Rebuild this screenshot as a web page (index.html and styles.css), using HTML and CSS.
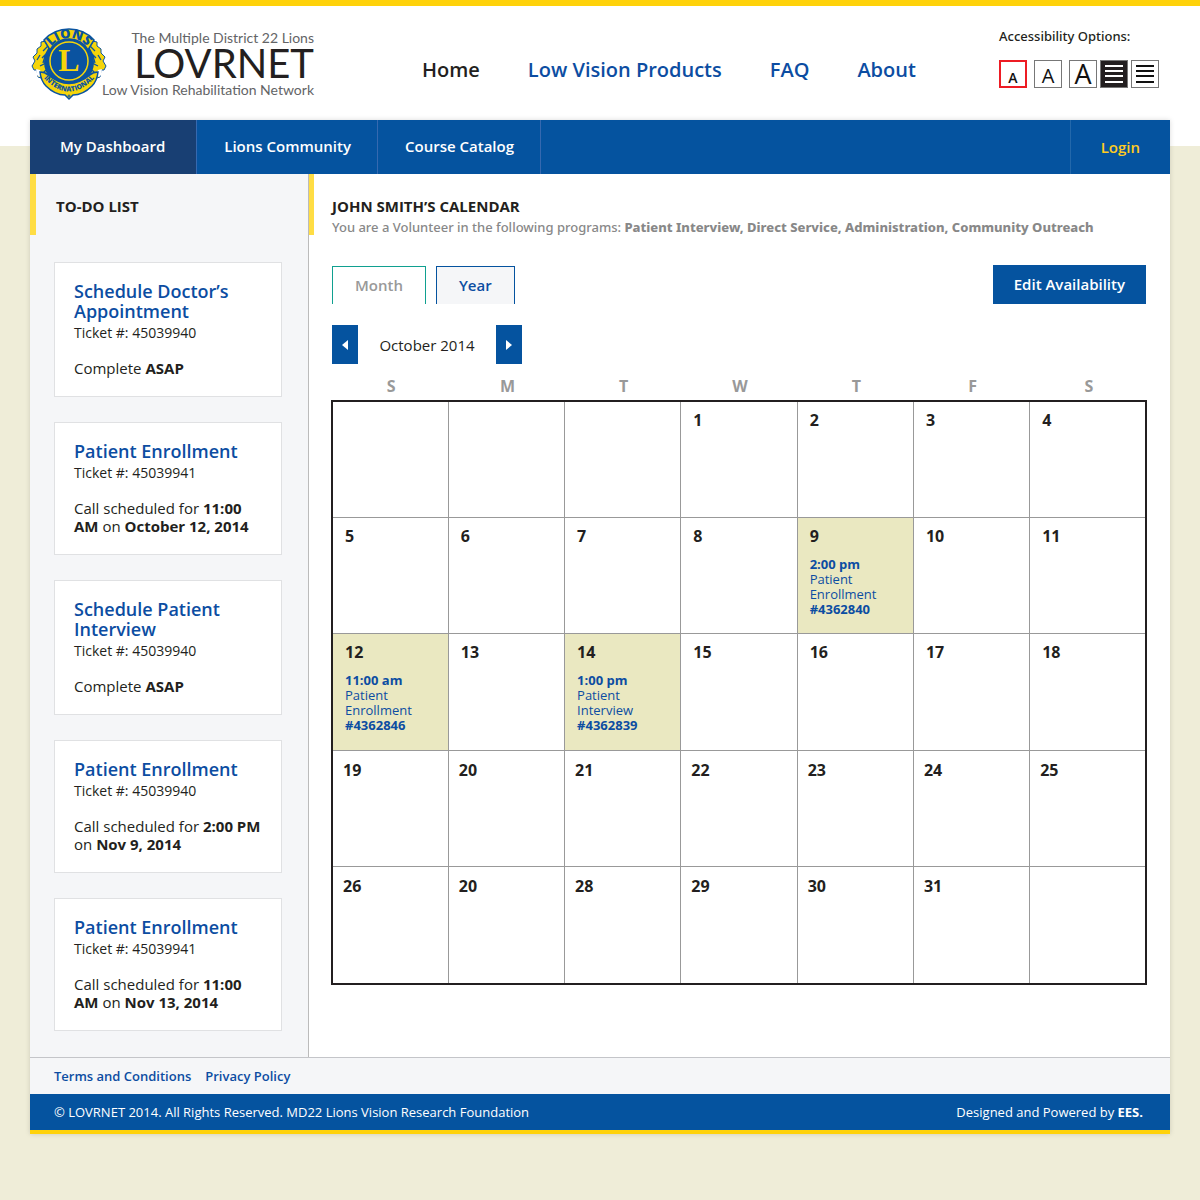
FILE: index.html
```html
<!DOCTYPE html>
<html lang="en">
<head>
<meta charset="utf-8">
<meta name="viewport" content="width=device-width, initial-scale=1">
<title>LOVRNET – My Dashboard</title>
<link rel="stylesheet" href="styles.css">
</head>
<body>
<header class="header">
  <a class="logo" href="#">
    <svg class="emblem" viewBox="0 0 76 74" width="76" height="74" role="img" aria-label="Lions International">
      <defs>
        <path id="arc-top" d="M15 35a23 23 0 0 1 46 0"/>
        <path id="arc-bottom" d="M9 48Q38 83 67 48"/>
      </defs>
      <g id="lion">
        <path fill="#f5d50a" stroke="#0a53a0" stroke-width="1" d="M22 13L17 12 15 15 10 16 10 20 6 23 6 27 2 31 4 35 1 40 3 44 6 44 7 51 13 53 24 52z"/>
        <path fill="none" stroke="#0a53a0" stroke-width="1.300" d="M17 20l-5 5M18 25l-7 7M14 30l-2 7M9 29l-3 5M15 37l-6 3M15 44l-3 3M15 17l2 3"/>
        <path fill="#fff" d="M5 43l4 1 2 5-3 2-2-2z"/>
      </g>
      <use href="#lion" transform="matrix(-1 0 0 1 76 0)"/>
      <circle cx="38" cy="36" r="25" fill="#0a53a0"/>
      <path fill="#f5d50a" stroke="#0a53a0" stroke-width="1.500" d="M13 14A34 34 0 0 1 63 14L57 24A22 22 0 0 0 19 24z"/>
      <circle cx="38" cy="35" r="19" fill="#0a53a0" stroke="#f5d50a" stroke-width="1.500"/>
      <path fill="#f5d50a" stroke="#0a53a0" stroke-width="1.500" d="M9 46Q14 46 17 49 38 66 59 49 62 46 67 46 66 55 61 60 52 69 42 69L38 73 34 69Q24 69 15 60 10 55 9 46z"/>
      <text class="emblem-name"><textPath href="#arc-top" startOffset="50%">LIONS</textPath></text>
      <text class="emblem-world"><textPath href="#arc-bottom" startOffset="50%">INTERNATIONAL</textPath></text>
      <text class="emblem-initial" x="38" y="45">L</text>
      <circle cx="38" cy="70" r="1" fill="none" stroke="#0a53a0"/>
    </svg>
    <span class="wordmark">
      <span class="wordmark-small">The Multiple District 22 Lions</span>
      <span class="wordmark-big">LOVRNET</span>
      <span class="wordmark-small">Low Vision Rehabilitation Network</span>
    </span>
  </a>
  <nav class="site-nav" aria-label="Site">
    <a class="current" href="#">Home</a>
    <a href="#">Low Vision Products</a>
    <a href="#">FAQ</a>
    <a href="#">About</a>
  </nav>
  <div class="access">
    <p class="access-title">Accessibility Options:</p>
    <div class="access-row">
      <button class="access-btn size-s selected" type="button" aria-label="Small text">A</button>
      <button class="access-btn size-m" type="button" aria-label="Medium text">A</button>
      <button class="access-btn size-l" type="button" aria-label="Large text">A</button>
      <button class="access-btn contrast dark" type="button" aria-label="High contrast">
        <svg width="18" height="18" viewBox="0 0 18 18"><path d="M0 1h18M0 6h18M0 11h18M0 17h18" stroke="currentColor" stroke-width="2"/></svg>
      </button>
      <button class="access-btn contrast" type="button" aria-label="Normal contrast">
        <svg width="18" height="18" viewBox="0 0 18 18"><path d="M0 1h18M0 6h18M0 11h18M0 17h18" stroke="currentColor" stroke-width="2"/></svg>
      </button>
    </div>
  </div>
</header>

<div class="page">
  <nav class="main-nav" aria-label="Main">
    <a class="active" href="#">My Dashboard</a>
    <a href="#">Lions Community</a>
    <a href="#">Course Catalog</a>
    <a class="login" href="#">Login</a>
  </nav>

  <div class="columns">
    <aside class="sidebar">
      <h2 class="heading sidebar-heading">TO-DO LIST</h2>
      <div class="tasks">
        <article class="task">
          <h3><a href="#">Schedule Doctor’s Appointment</a></h3>
          <p>Ticket #: 45039940</p>
          <p class="note">Complete <b>ASAP</b></p>
        </article>
        <article class="task">
          <h3><a href="#">Patient Enrollment</a></h3>
          <p>Ticket #: 45039941</p>
          <p class="note">Call scheduled for <b>11:00 AM</b> on <b>October 12, 2014</b></p>
        </article>
        <article class="task">
          <h3><a href="#">Schedule Patient Interview</a></h3>
          <p>Ticket #: 45039940</p>
          <p class="note">Complete <b>ASAP</b></p>
        </article>
        <article class="task">
          <h3><a href="#">Patient Enrollment</a></h3>
          <p>Ticket #: 45039940</p>
          <p class="note">Call scheduled for <b>2:00 PM</b> on <b>Nov 9, 2014</b></p>
        </article>
        <article class="task">
          <h3><a href="#">Patient Enrollment</a></h3>
          <p>Ticket #: 45039941</p>
          <p class="note">Call scheduled for <b>11:00 AM</b> on <b>Nov 13, 2014</b></p>
        </article>
      </div>
    </aside>

    <main class="main">
      <div class="main-head">
        <h1 class="heading">JOHN SMITH’S CALENDAR</h1>
        <p class="programs">You are a Volunteer in the following programs: <b>Patient Interview, Direct Service, Administration, Community Outreach</b></p>
      </div>
      <div class="toolbar">
        <div class="tabs">
          <button class="tab tab-month" type="button">Month</button>
          <button class="tab tab-year" type="button">Year</button>
        </div>
        <button class="edit" type="button">Edit Availability</button>
      </div>
      <div class="pager">
        <button class="pager-btn" type="button" aria-label="Previous month"><svg width="6" height="10" viewBox="0 0 6 10"><path d="M6 0v10L0 5z" fill="currentColor"/></svg></button>
        <span class="pager-label">October 2014</span>
        <button class="pager-btn" type="button" aria-label="Next month"><svg width="6" height="10" viewBox="0 0 6 10"><path d="M0 0v10L6 5z" fill="currentColor"/></svg></button>
      </div>
      <table class="calendar">
        <thead>
          <tr><th>S</th><th>M</th><th>T</th><th>W</th><th>T</th><th>F</th><th>S</th></tr>
        </thead>
        <tbody>
          <tr><td></td><td></td><td></td><td>1</td><td>2</td><td>3</td><td>4</td></tr>
          <tr><td>5</td><td>6</td><td>7</td><td>8</td>
            <td class="busy">9<a class="event" href="#"><b>2:00 pm</b> <span>Patient Enrollment</span> <b>#4362840</b></a></td>
            <td>10</td><td>11</td></tr>
          <tr><td class="busy">12<a class="event" href="#"><b>11:00 am</b> <span>Patient Enrollment</span> <b>#4362846</b></a></td>
            <td>13</td>
            <td class="busy">14<a class="event" href="#"><b>1:00 pm</b> <span>Patient Interview</span> <b>#4362839</b></a></td>
            <td>15</td><td>16</td><td>17</td><td>18</td></tr>
          <tr><td>19</td><td>20</td><td>21</td><td>22</td><td>23</td><td>24</td><td>25</td></tr>
          <tr><td>26</td><td>20</td><td>28</td><td>29</td><td>30</td><td>31</td><td></td></tr>
        </tbody>
      </table>
    </main>
  </div>

  <footer>
    <div class="links">
      <a href="#">Terms and Conditions</a>
      <a href="#">Privacy Policy</a>
    </div>
    <div class="legal">
      <span>© LOVRNET 2014. All Rights Reserved. MD22 Lions Vision Research Foundation</span>
      <span>Designed and Powered by <b>EES.</b></span>
    </div>
  </footer>
</div>
</body>
</html>
```
FILE: styles.css
```css
* { box-sizing: border-box; }

:root {
  --blue: #05539f;
  --link: #0c4da2;
  --ink: #231f20;
  --yellow: #ffd20a;
  --pale: #f5f6f8;
  --grey: #999;
}

body {
  margin: 0;
  min-height: 100vh;
  background: #efedd8 linear-gradient(#fff, #fff) no-repeat 0 0 / 100% 146px;
  border-top: 6px solid var(--yellow);
  color: var(--ink);
  font-family: "Open Sans", "Noto Sans", sans-serif;
  font-size: 15px;
}

h1, h2, h3, p { margin: 0; }
a { color: var(--link); text-decoration: none; }
button { padding: 0; font-family: inherit; cursor: pointer; }

/* Header */
.header {
  display: flex;
  align-items: flex-start;
  height: 114px;
  padding: 20px 41px 0 31px;
}

.logo { display: flex; color: var(--ink); }
.emblem { flex: none; margin-right: -3px; overflow: visible; }
.emblem text { text-anchor: middle; font-family: "Open Sans", sans-serif; font-weight: 800; }
.emblem .emblem-name { fill: #0a53a0; font-size: 13px; }
.emblem .emblem-world { fill: #0a53a0; font-size: 7px; }
.emblem .emblem-initial { fill: #f5d50a; font-family: "Liberation Serif", serif; font-weight: 700; font-size: 32px; }

.wordmark {
  display: flex;
  flex-direction: column;
  align-items: flex-end;
  width: 210px;
  padding-top: 3px;
  font-family: Lato, sans-serif;
}
.wordmark-small { color: #636466; font-size: 14px; line-height: 17px; white-space: nowrap; }
.wordmark-big { font-size: 40px; line-height: 35px; }

.site-nav {
  display: flex;
  gap: 48px;
  margin-left: 108px;
  padding-top: 30px;
  font-size: 20px;
  font-weight: 600;
  line-height: 28px;
  white-space: nowrap;
}
.site-nav .current { color: var(--ink); }

.access { margin-left: auto; }
.access-title { font-family: "Noto Sans", sans-serif; font-size: 13px; font-weight: 500; line-height: 20px; }
.access-row { display: flex; gap: 7px; margin-top: 14px; }
.access-btn {
  display: flex;
  align-items: flex-end;
  justify-content: center;
  width: 28px;
  height: 28px;
  border: 1px solid #777;
  background: #fff;
  color: #111;
}
.selected { border: 2px solid #ed1c24; }
.size-s { font-size: 14px; font-weight: 600; line-height: 16px; }
.size-m { font-size: 20px; line-height: 22px; }
.size-l { font-size: 27px; line-height: 27px; }
.contrast { align-items: center; margin-left: -4px; }
.dark { background: var(--ink); color: #fff; }

/* Page shell */
.page { margin: 0 30px 66px; box-shadow: 0 0 5px rgba(0, 0, 0, .15); }

.main-nav { display: flex; background: var(--blue); }
.main-nav a {
  padding: 0 26px 2px 27px;
  border-right: 1px solid #3669b0;
  color: #fff;
  font-size: 15px;
  font-weight: 600;
  line-height: 52px;
}
.main-nav .active { padding: 0 31px 0 30px; background: #183f73; }
.main-nav .login {
  margin-left: auto;
  padding: 0 30px;
  border-right: 0;
  border-left: 1px solid #2368ab;
  color: #fc2;
  line-height: 54px;
}

.columns { display: flex; background: #fff; }

.heading { font-size: 15px; font-weight: 700; line-height: 22px; }

/* To-do list */
.sidebar {
  flex: none;
  width: 279px;
  padding-bottom: 26px;
  border-right: 1px solid #bbb;
  background: var(--pale);
}
.sidebar-heading {
  height: 61px;
  padding: 21px 0 0 20px;
  border-left: 6px solid #fd4;
}
.tasks {
  display: flex;
  flex-direction: column;
  gap: 25px;
  padding: 27px 26px 0 24px;
}
.task {
  padding: 18px 19px 19px;
  border: 1px solid #e0e1e3;
  background: #fff;
  font-size: 14px;
  line-height: 18px;
}
.task h3 { margin-bottom: 3px; font-size: 18px; font-weight: 600; line-height: 20px; }
.task .note { margin-top: 17px; font-size: 15px; }

/* Calendar */
.main { flex: 1; min-width: 0; }
.main-head {
  height: 61px;
  padding: 21px 0 0 18px;
  border-left: 5px solid #fd4;
}
.programs {
  color: #888;
  font-family: "Noto Sans", sans-serif;
  font-size: 13px;
  font-weight: 500;
  line-height: 20px;
  white-space: nowrap;
}
.programs b { font-weight: 800; }

.toolbar {
  display: flex;
  justify-content: space-between;
  align-items: flex-end;
  padding: 30px 24px 0 23px;
}
.tabs { display: flex; gap: 10px; }
.tab {
  height: 38px;
  padding: 0 22px 2px;
  border: 1px solid;
  border-bottom: 0;
  font-size: 15px;
  font-weight: 600;
}
.tab-month { border-color: #10a090; background: #fff; color: var(--grey); }
.tab-year { border-color: var(--blue); background: var(--pale); color: var(--link); }
.edit {
  height: 39px;
  padding: 0 21px 2px;
  border: 0;
  background: var(--blue);
  color: #fff;
  font-size: 15px;
  font-weight: 600;
}

.pager { display: flex; align-items: center; padding: 21px 23px 0; }
.pager-btn {
  display: flex;
  align-items: center;
  justify-content: center;
  width: 26px;
  height: 39px;
  border: 0;
  background: var(--blue);
  color: #fff;
}
.pager-label { width: 138px; text-align: center; }

.calendar {
  width: calc(100% - 45px);
  margin: 0 23px 71px 22px;
  border-collapse: collapse;
  table-layout: fixed;
}
.calendar th {
  height: 37px;
  padding: 8px 0 0 2px;
  color: var(--grey);
  font-size: 16px;
  font-weight: 700;
  line-height: 22px;
}
.calendar tbody { border: 2px solid var(--ink); }
.calendar td {
  height: 116px;
  padding: 7px 12px 0;
  border: 1px solid #999;
  font-size: 16px;
  font-weight: 700;
  line-height: 22px;
  vertical-align: top;
}
.calendar tr:nth-child(3) td { height: 117px; }
.calendar tr:nth-child(5) td { height: 118px; }
.calendar tr:nth-child(n+4) td { padding: 8px 10px 0; }
.calendar .busy { background: #eae8c1; }
.event {
  display: block;
  margin-top: 10px;
  font-size: 13px;
  font-weight: 400;
  line-height: 15px;
}
.event b, .event span { display: block; }

/* Footer */
.links {
  display: flex;
  gap: 14px;
  padding: 0 24px;
  border-top: 1px solid #c4c5c9;
  background: var(--pale);
  font-size: 13px;
  font-weight: 600;
  line-height: 36px;
}
.legal {
  display: flex;
  justify-content: space-between;
  padding: 0 27px 0 24px;
  border-bottom: 4px solid var(--yellow);
  background: var(--blue);
  color: #fff;
  font-size: 13px;
  line-height: 36px;
}
```
